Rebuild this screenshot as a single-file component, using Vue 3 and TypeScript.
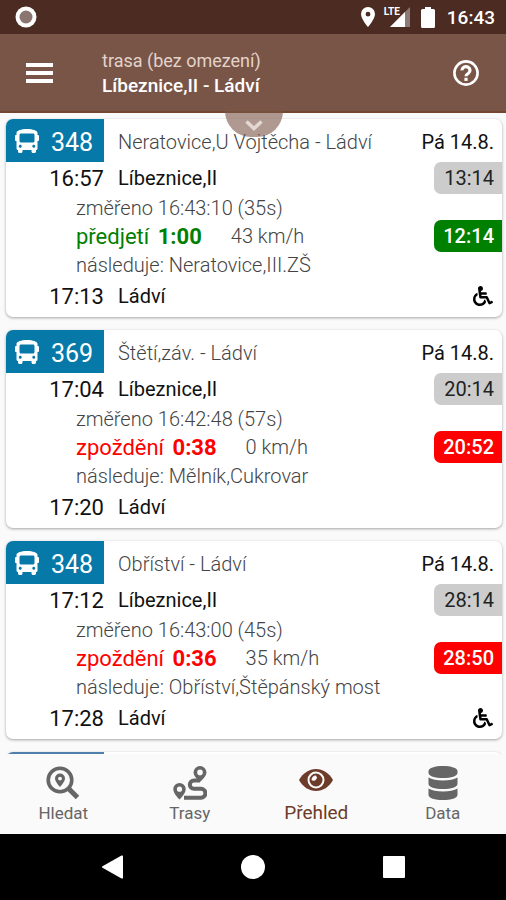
<script setup lang="ts">
interface Departure {
  line: string
  route: string
  date: string
  from: string
  departs: string
  to: string
  arrives: string
  measured: string
  state: 'early' | 'late'
  deviation: string
  speed: string
  next: string
  planned: string
  actual: string
  accessible: boolean
}

const departures: Departure[] = [
  {
    line: '348', route: 'Neratovice,U Vojtěcha - Ládví', date: 'Pá 14.8.',
    from: 'Líbeznice,II', departs: '16:57', to: 'Ládví', arrives: '17:13',
    measured: '16:43:10 (35s)', state: 'early', deviation: '1:00', speed: '43 km/h',
    next: 'Neratovice,III.ZŠ', planned: '13:14', actual: '12:14', accessible: true,
  },
  {
    line: '369', route: 'Štětí,záv. - Ládví', date: 'Pá 14.8.',
    from: 'Líbeznice,II', departs: '17:04', to: 'Ládví', arrives: '17:20',
    measured: '16:42:48 (57s)', state: 'late', deviation: '0:38', speed: '0 km/h',
    next: 'Mělník,Cukrovar', planned: '20:14', actual: '20:52', accessible: false,
  },
  {
    line: '348', route: 'Obříství - Ládví', date: 'Pá 14.8.',
    from: 'Líbeznice,II', departs: '17:12', to: 'Ládví', arrives: '17:28',
    measured: '16:43:00 (45s)', state: 'late', deviation: '0:36', speed: '35 km/h',
    next: 'Obříství,Štěpánský most', planned: '28:14', actual: '28:50', accessible: true,
  },
]

const stateLabel = { early: 'předjetí', late: 'zpoždění' }
</script>

<template>
  <div class="screen">
    <div class="status">
      <svg class="record" viewBox="0 0 22 22" aria-hidden="true">
        <circle cx="11" cy="11" r="10.5" fill="#fff" />
        <circle cx="11" cy="11" r="6.5" fill="#8b7570" />
      </svg>
      <svg class="pin" viewBox="0 0 14 20" aria-hidden="true">
        <path fill="#fff" fill-rule="evenodd" d="M7 0a7 7 0 0 0-7 7c0 5 7 13 7 13s7-8 7-13a7 7 0 0 0-7-7zm0 4.800a2.400 2.400 0 1 1 0 4.800 2.400 2.400 0 0 1 0-4.800z" />
      </svg>
      <div class="signal">
        <svg width="20" height="20" viewBox="0 0 20 20" aria-hidden="true">
          <path fill="#8d7a74" d="M20 0v20H0z" />
          <path fill="#fff" d="M15 5v15H0z" />
        </svg>
        <span class="lte">LTE</span>
      </div>
      <svg class="battery" viewBox="0 0 14 21" aria-hidden="true">
        <path fill="#fff" d="M4 0h6v2h2.500a1.500 1.500 0 0 1 1.500 1.500v16a1.500 1.500 0 0 1-1.500 1.500h-11A1.500 1.500 0 0 1 0 19.500v-16A1.500 1.500 0 0 1 1.500 2H4z" />
      </svg>
      <span class="clock">16:43</span>
    </div>

    <header class="bar">
      <button class="icon-button" type="button" aria-label="Menu">
        <svg width="27" height="20" viewBox="0 0 27 20"><path fill="#fff" d="M0 0h27v4H0zM0 8h27v4H0zM0 16h27v4H0z" /></svg>
      </button>
      <div class="titles">
        <p class="subtitle">trasa (bez omezení)</p>
        <h1>Líbeznice,II - Ládví</h1>
      </div>
      <button class="icon-button" type="button" aria-label="Nápověda">
        <svg width="26" height="26" viewBox="0 0 26 26" fill="none" stroke="#fff">
          <circle cx="13" cy="13" r="11.600" stroke-width="2.600" />
          <path d="M9 10.400a4 3.700 0 1 1 6.400 2.900c-1.400.9-2.400 1.400-2.400 3" stroke-width="3.200" />
          <path d="M13 17.700v3.200" stroke-width="3.200" />
        </svg>
      </button>
      <button class="handle" type="button" aria-label="Rozbalit">
        <svg width="18" height="11" viewBox="0 0 18 11" fill="none" stroke="#e3d8d3" stroke-width="3.500"><path d="M1.500 1.500L9 8.500l7.500-7" /></svg>
      </button>
    </header>

    <main class="list">
      <article v-for="(d, i) in departures" :key="i" class="card">
        <div class="row head">
          <div class="line">
            <svg width="24" height="24" viewBox="0 0 512 512" aria-hidden="true"><path fill="#fff" d="M488 128h-8V80c0-44.800-99.200-80-224-80S32 35.200 32 80v48h-8c-13.250 0-24 10.740-24 24v80c0 13.250 10.750 24 24 24h8v160c0 17.670 14.330 32 32 32v32c0 17.670 14.330 32 32 32h32c17.670 0 32-14.330 32-32v-32h192v32c0 17.670 14.330 32 32 32h32c17.670 0 32-14.330 32-32v-32h6.400c16 0 25.600-12.800 25.600-25.600V256h8c13.250 0 24-10.750 24-24v-80c0-13.260-10.750-24-24-24zM112 400c-17.670 0-32-14.330-32-32s14.330-32 32-32 32 14.330 32 32-14.330 32-32 32zm16-112c-17.670 0-32-14.330-32-32V128c0-17.670 14.330-32 32-32h256c17.670 0 32 14.330 32 32v128c0 17.670-14.330 32-32 32H128zm272 112c-17.670 0-32-14.330-32-32s14.330-32 32-32 32 14.330 32 32-14.330 32-32 32z" /></svg>
            <span class="number">{{ d.line }}</span>
          </div>
          <span class="route">{{ d.route }}</span>
          <span class="date">{{ d.date }}</span>
        </div>
        <div class="row stop">
          <span class="time">{{ d.departs }}</span>
          <span class="name">{{ d.from }}</span>
          <span class="badge planned">{{ d.planned }}</span>
        </div>
        <div class="row detail">změřeno {{ d.measured }}</div>
        <div class="row detail" :class="d.state">
          <span class="deviation">{{ stateLabel[d.state] }} <b>{{ d.deviation }}</b></span>
          <span class="speed">{{ d.speed }}</span>
          <span class="badge actual">{{ d.actual }}</span>
        </div>
        <div class="row detail next">následuje: {{ d.next }}</div>
        <div class="row stop">
          <span class="time">{{ d.arrives }}</span>
          <span class="name">{{ d.to }}</span>
          <svg v-if="d.accessible" class="wheelchair" width="20" height="20" viewBox="0 0 512 512" role="img" aria-label="Bezbariérový"><path d="M496.101 385.669l14.227 28.663c3.929 7.915.697 17.516-7.218 21.445l-65.465 32.886c-16.049 7.967-35.556 1.194-43.189-15.055L331.679 320H192c-15.925 0-29.426-11.710-31.679-27.475C126.433 55.308 128.380 70.044 128 64c0-36.358 30.318-65.635 67.052-63.929 33.271 1.545 60.048 28.905 60.925 62.201.868 32.933-23.152 60.423-54.608 65.039l4.670 32.690H336c8.837 0 16 7.163 16 16v32c0 8.837-7.163 16-16 16H215.182l4.572 32H352a32 32 0 0 1 28.962 18.392L438.477 396.800l36.178-18.349c7.915-3.929 17.517-.697 21.446 7.218zM311.358 352h-24.506c-7.788 54.204-54.528 96-110.852 96-61.757 0-112-50.243-112-112 0-41.505 22.694-77.809 56.324-97.156-3.712-25.965-6.844-47.860-9.488-66.333C45.956 198.464 0 261.963 0 336c0 97.047 78.953 176 176 176 71.870 0 133.806-43.308 161.110-105.192L311.358 352z" /></svg>
        </div>
      </article>
      <article class="card upcoming"><div class="line"></div></article>
    </main>

    <nav class="tabs">
      <a href="#hledat">
        <svg width="34" height="34" viewBox="0 0 34 34" aria-hidden="true">
          <circle cx="14" cy="14" r="11.800" fill="none" stroke="currentColor" stroke-width="3.600" />
          <path d="M23 23l8.500 8.500" fill="none" stroke="currentColor" stroke-width="5" />
          <path fill="currentColor" fill-rule="evenodd" d="M14 7.500a5 5 0 0 0-5 5c0 3.200 5 8.500 5 8.500s5-5.300 5-8.500a5 5 0 0 0-5-5zm0 3.200a1.900 1.900 0 1 1 0 3.800 1.900 1.900 0 0 1 0-3.800z" />
        </svg>
        <span>Hledat</span>
      </a>
      <a href="#trasy">
        <svg width="34" height="34" viewBox="0 0 34 34" aria-hidden="true">
          <path d="M27 14.500h-6a4 4 0 0 0 0 8.300h7a4.400 4.400 0 0 1 0 8.900H11" fill="none" stroke="currentColor" stroke-width="4" />
          <path fill="currentColor" fill-rule="evenodd" d="M27 0a6.500 6.500 0 0 0-6.500 6.500c0 4 6.500 9.500 6.500 9.500s6.500-5.500 6.500-9.500A6.500 6.500 0 0 0 27 0zm0 3.600a2.800 2.800 0 1 1 0 5.600 2.800 2.800 0 0 1 0-5.600z" />
          <path fill="currentColor" fill-rule="evenodd" d="M6.500 17a6.200 6.200 0 0 0-6.200 6.200c0 4.300 6.200 10.300 6.200 10.300s6.200-6 6.200-10.300A6.200 6.200 0 0 0 6.500 17zm0 3.600a2.600 2.600 0 1 1 0 5.200 2.600 2.600 0 0 1 0-5.200z" />
        </svg>
        <span>Trasy</span>
      </a>
      <a href="#prehled" class="active" aria-current="page">
        <svg width="34" height="34" viewBox="0 0 34 34" aria-hidden="true">
          <path fill="currentColor" d="M0 14C4 7 10 3 17 3s13 4 17 11c-4 7-10 11-17 11S4 21 0 14z" />
          <circle cx="17" cy="14" r="7.500" fill="none" stroke="#fafafa" stroke-width="2" />
          <path fill="#fafafa" d="M17 9.500a4.500 4.500 0 0 0-4.500 4.500 3 3 0 0 0 4.500-.5 3 3 0 0 0 0-4z" />
        </svg>
        <span>Přehled</span>
      </a>
      <a href="#data">
        <svg width="34" height="34" viewBox="0 0 34 34" aria-hidden="true">
          <g fill="currentColor">
            <path d="M2.500 5C2.500 2 9 0 17 0s14.500 2 14.500 5v2c0 3-6.500 5-14.500 5S2.500 10 2.500 7z" />
            <path d="M2.500 11.500c3 2 8.500 3 14.500 3s11.500-1 14.500-3V18c0 3-6.500 5-14.500 5S2.500 21 2.500 18z" />
            <path d="M2.500 22.500c3 2 8.500 3 14.500 3s11.500-1 14.500-3V29c0 3-6.500 5-14.500 5S2.500 32 2.500 29z" />
          </g>
        </svg>
        <span>Data</span>
      </a>
    </nav>

    <div class="system">
      <button type="button" aria-label="Zpět"><svg width="24" height="24" viewBox="0 0 24 24"><path fill="#fff" d="M2.500 11.200L21.500.6q1.500-.7 1.500 1v20.800q0 1.700-1.500 1L2.500 12.800q-1.300-.8 0-1.600z" /></svg></button>
      <button type="button" aria-label="Domů"><svg width="24" height="24" viewBox="0 0 24 24"><circle cx="12" cy="12" r="12" fill="#fff" /></svg></button>
      <button type="button" aria-label="Poslední aplikace"><svg width="24" height="24" viewBox="0 0 24 24"><rect x="1" y="1" width="22" height="22" rx="1" fill="#fff" /></svg></button>
    </div>
  </div>
</template>

<style>
body {
  margin: 0;
}
</style>

<style scoped>
.screen {
  display: flex;
  flex-direction: column;
  height: 100vh;
  overflow: hidden;
  background: #fafafa;
  color: #111;
  font-family: Roboto, "Noto Sans", sans-serif;
}

button {
  display: flex;
  align-items: center;
  justify-content: center;
  padding: 0;
  border: 0;
  background: none;
}

svg {
  display: block;
  flex: none;
}

.status {
  display: flex;
  align-items: center;
  flex: none;
  height: 34px;
  padding: 0 11px 0 15px;
  background: #4b2b22;
  color: #fff;
}

.record {
  width: 22px;
  height: 22px;
  margin-right: auto;
}

.pin {
  width: 14px;
  height: 20px;
}

.signal {
  position: relative;
  margin: 0 11px 0 15px;
}

.lte {
  position: absolute;
  top: -1px;
  left: -6px;
  background: #4b2b22;
  font-size: 10px;
  font-weight: 700;
  line-height: 11px;
}

.battery {
  width: 14px;
  height: 21px;
}

.clock {
  margin-left: 12px;
  font-size: 19px;
  font-weight: 500;
}

.bar {
  position: relative;
  display: flex;
  align-items: center;
  flex: none;
  box-sizing: border-box;
  height: 79px;
  padding: 0 27px 0 26px;
  border-bottom: 2px solid #74462f;
  background: #795548;
  color: #fff;
}

.titles {
  flex: 1;
  margin-left: 49px;
}

.titles p,
.titles h1 {
  margin: 0;
  font-size: 18px;
  font-weight: 400;
  line-height: 25px;
}

.titles .subtitle {
  color: #e3d3cb;
}

.titles h1 {
  font-size: 19px;
  font-weight: 500;
}

.handle {
  position: absolute;
  top: 100%;
  left: 50%;
  z-index: 1;
  width: 58px;
  height: 26px;
  margin-left: -28px;
  padding-top: 2px;
  border-radius: 0 0 28px 28px;
  background: rgba(121, 85, 72, 0.6);
}

.list {
  display: flex;
  flex-direction: column;
  flex: 1;
  gap: 13px;
  min-height: 0;
  padding: 6px 4px 0 6px;
  overflow: hidden;
}

.card {
  flex: none;
  padding-bottom: 5px;
  border-radius: 7px;
  background: #fff;
  box-shadow: 0 1px 3px rgba(0, 0, 0, 0.35);
  overflow: hidden;
}

.row {
  display: flex;
  align-items: center;
  white-space: nowrap;
}

.line {
  display: flex;
  align-items: center;
  box-sizing: border-box;
  width: 98px;
  height: 43px;
  padding-left: 9px;
  gap: 12px;
  background: #0779a8;
  color: #fff;
  font-size: 25px;
}

.upcoming .line {
  background: #4f7fab;
}

.number,
.route,
.date {
  padding-top: 3px;
}

.route {
  flex: 1;
  margin-left: 14px;
  color: #444;
  font-size: 20px;
  font-weight: 300;
}

.date {
  padding-right: 8px;
  font-size: 20px;
}

.stop {
  height: 32px;
  font-size: 20px;
}

.time {
  box-sizing: border-box;
  width: 98px;
  font-size: 22px;
  text-align: right;
}

.name {
  margin-left: 14px;
}

.detail {
  height: 28px;
  padding-left: 70px;
  color: #444;
  font-size: 20px;
  font-weight: 300;
}

.next {
  height: 30px;
}

.deviation {
  font-size: 22px;
  font-weight: 400;
}

.deviation b {
  margin-left: 3px;
}

.speed {
  margin-left: 29px;
}

.early .deviation {
  color: #008000;
}

.late .deviation {
  color: #f00;
}

.badge {
  box-sizing: border-box;
  width: 68px;
  margin-left: auto;
  padding-right: 8px;
  border-radius: 7px 0 0 7px;
  font-size: 20px;
  line-height: 32px;
  text-align: right;
}

.planned {
  background: #ccc;
  color: #222;
}

.actual {
  color: #fff;
  font-weight: 500;
}

.early .actual {
  background: #008000;
}

.late .actual {
  background: #f00;
}

.wheelchair {
  margin: 0 9px 0 auto;
}

.tabs {
  display: flex;
  flex: none;
  box-sizing: border-box;
  height: 80px;
  padding-top: 12px;
  background: #fafafa;
}

.tabs a {
  display: flex;
  flex: 1;
  flex-direction: column;
  align-items: center;
  gap: 1px;
  color: #666;
  font-size: 17px;
  line-height: 24px;
  text-decoration: none;
}

.tabs .active {
  color: #6d3b29;
  font-size: 19px;
}

.system {
  display: flex;
  align-items: center;
  justify-content: center;
  flex: none;
  gap: 117px;
  height: 66px;
  background: #000;
}
</style>
